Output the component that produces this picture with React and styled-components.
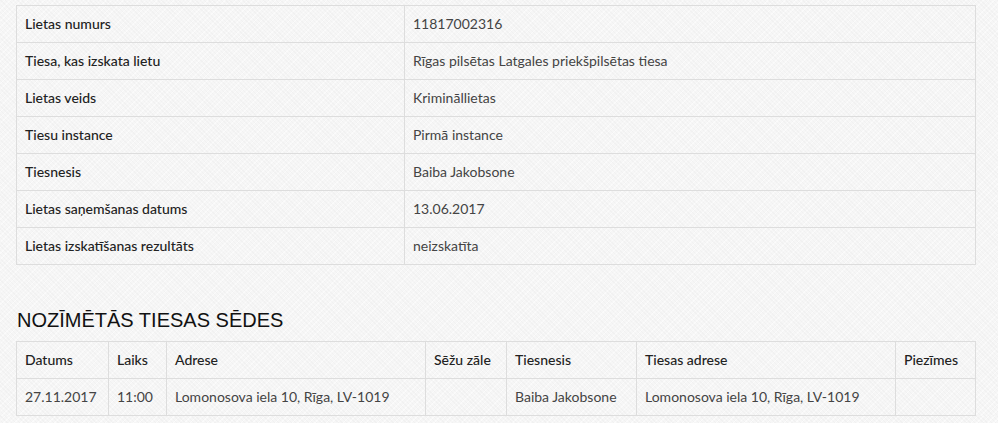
import React from 'react';
import styled, { createGlobalStyle } from 'styled-components';

const GlobalStyle = createGlobalStyle`
  html, body {
    margin: 0;
    padding: 0;
    background-color: #f6f6f6;
    background-image:
      repeating-linear-gradient(45deg, rgba(0, 0, 0, 0.018) 0 1px, transparent 1px 3px),
      repeating-linear-gradient(-45deg, rgba(255, 255, 255, 0.5) 0 1px, transparent 1px 4px);
  }
  body {
    font-family: Lato, "Open Sans", sans-serif;
  }
`;

const Page = styled.div`
  padding: 5px 22px 0 16px;
  width: 960px;
`;

const Table = styled.table`
  width: 100%;
  border-collapse: collapse;
  table-layout: fixed;
  font-size: 14px;
  line-height: 20px;
`;

const LabelCell = styled.td`
  width: 371px;
  padding: 8px;
  border: 1px solid #dddddd;
  color: #222;
  font-weight: 500;
`;

const ValueCell = styled.td`
  padding: 8px;
  border: 1px solid #dddddd;
  color: #444;
`;

const HeadCell = styled.th`
  padding: 8px;
  border: 1px solid #dddddd;
  color: #222;
  font-weight: 500;
  text-align: left;
  white-space: nowrap;
  overflow: hidden;
`;

const BodyCell = styled.td`
  padding: 8px;
  border: 1px solid #dddddd;
  color: #444;
  white-space: nowrap;
  overflow: hidden;
`;

const Heading = styled.h3`
  margin: 43px 0 9px 1px;
  font-family: "Liberation Sans", Arial, sans-serif;
  font-weight: 400;
  font-size: 20px;
  line-height: 24px;
  color: #111;
`;

const details = [
  ['Lietas numurs', '11817002316'],
  ['Tiesa, kas izskata lietu', 'Rīgas pilsētas Latgales priekšpilsētas tiesa'],
  ['Lietas veids', 'Krimināllietas'],
  ['Tiesu instance', 'Pirmā instance'],
  ['Tiesnesis', 'Baiba Jakobsone'],
  ['Lietas saņemšanas datums', '13.06.2017'],
  ['Lietas izskatīšanas rezultāts', 'neizskatīta'],
];

const columns = [
  { title: 'Datums', width: 92 },
  { title: 'Laiks', width: 58 },
  { title: 'Adrese', width: 259 },
  { title: 'Sēžu zāle', width: 81 },
  { title: 'Tiesnesis', width: 130 },
  { title: 'Tiesas adrese', width: 259 },
  { title: 'Piezīmes', width: 80 },
];

const hearings = [
  ['27.11.2017', '11:00', 'Lomonosova iela 10, Rīga, LV-1019', '', 'Baiba Jakobsone', 'Lomonosova iela 10, Rīga, LV-1019', ''],
];

export default function App() {
  return (
    <>
      <GlobalStyle />
      <Page>
        <Table>
          <tbody>
            {details.map(([label, value]) => (
              <tr key={label}>
                <LabelCell>{label}</LabelCell>
                <ValueCell>{value}</ValueCell>
              </tr>
            ))}
          </tbody>
        </Table>

        <Heading>NOZĪMĒTĀS TIESAS SĒDES</Heading>

        <Table>
          <colgroup>
            {columns.map((col) => (
              <col key={col.title} style={{ width: col.width }} />
            ))}
          </colgroup>
          <thead>
            <tr>
              {columns.map((col) => (
                <HeadCell key={col.title}>{col.title}</HeadCell>
              ))}
            </tr>
          </thead>
          <tbody>
            {hearings.map((row, i) => (
              <tr key={i}>
                {row.map((cell, j) => (
                  <BodyCell key={j}>{cell}</BodyCell>
                ))}
              </tr>
            ))}
          </tbody>
        </Table>
      </Page>
    </>
  );
}
